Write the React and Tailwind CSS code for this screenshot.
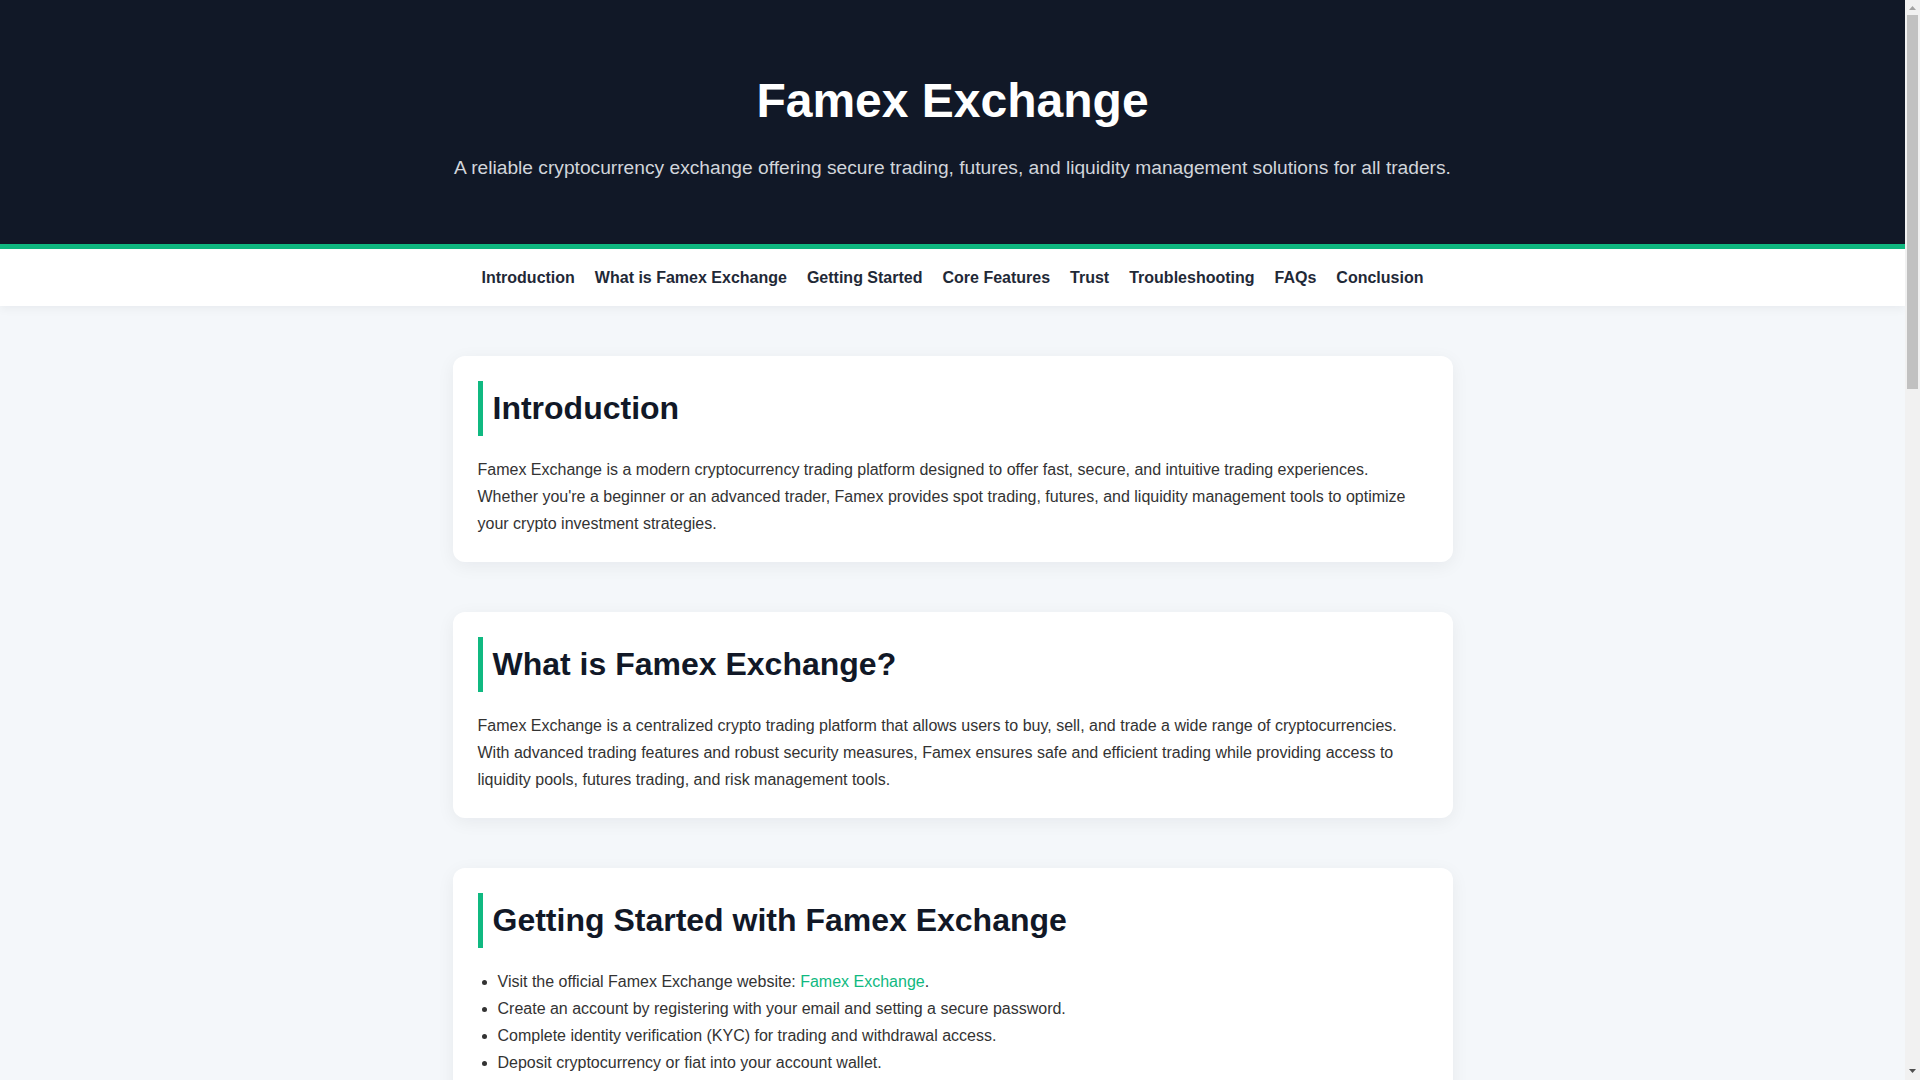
import React from "react";

const navItems = [
  "Introduction",
  "What is Famex Exchange",
  "Getting Started",
  "Core Features",
  "Trust",
  "Troubleshooting",
  "FAQs",
  "Conclusion",
];

function Card({ title, children }) {
  return (
    <section className="bg-white rounded-[12px] p-[25px] shadow-[0_4px_18px_rgba(15,23,42,0.06)]">
      <h2 className="border-l-[5px] border-[#10b981] pl-[10px] py-2 text-[32px] leading-[1.2] font-bold text-[#111827] mb-[20px]">
        {title}
      </h2>
      {children}
    </section>
  );
}

function P({ children, className = "" }) {
  return <p className={"text-[16px] leading-[1.7] text-[#333333] " + className}>{children}</p>;
}

function UL({ items }) {
  return (
    <ul className="list-disc pl-5 text-[16px] leading-[1.7] text-[#333333]">
      {items.map((it, i) => (
        <li key={i}>{it}</li>
      ))}
    </ul>
  );
}

function FakeScrollbar() {
  return (
    <div className="fixed top-0 right-0 h-screen w-[15px] bg-[#f1f1f1] flex flex-col">
      <div className="h-[15px] flex items-start justify-center pt-[6px]">
        <svg width="7" height="4" viewBox="0 0 7 4">
          <polygon points="3.5,0 7,4 0,4" fill="#a3a3a3" />
        </svg>
      </div>
      <div className="flex-1 px-[2px]">
        <div className="h-[374px] bg-[#c1c1c1]" />
      </div>
      <div className="h-[15px] flex items-start justify-center pt-[4px]">
        <svg width="7" height="4" viewBox="0 0 7 4">
          <polygon points="0,0 7,0 3.5,4" fill="#505050" />
        </svg>
      </div>
    </div>
  );
}

export default function App() {
  return (
    <div className="min-h-screen bg-[#f4f7fa] pr-[15px] font-['Liberation_Sans',Arial,sans-serif]">
      <header className="bg-[#111827] border-b-[5px] border-[#10b981] pt-[72px] pb-[61px] text-center">
        <h1 className="text-[48px] leading-[1.2] font-bold text-white">Famex Exchange</h1>
        <p className="mt-[23px] text-[19.2px] leading-[1.6] text-[#d1d5db]">
          A reliable cryptocurrency exchange offering secure trading, futures, and liquidity management solutions for all traders.
        </p>
      </header>

      <nav className="bg-white h-[57px] flex items-center justify-center gap-[20px] shadow-[0_2px_10px_rgba(15,23,42,0.06)] relative">
        {navItems.map((n) => (
          <a key={n} href="#" className="text-[16px] font-bold text-[#1f2937]">
            {n}
          </a>
        ))}
      </nav>

      <main className="max-w-[1000px] mx-auto pt-[50px] pb-[50px] flex flex-col gap-[50px]">
        <Card title="Introduction">
          <P>
            Famex Exchange is a modern cryptocurrency trading platform designed to offer fast, secure, and intuitive trading experiences. Whether you're a beginner or an advanced trader, Famex provides spot trading, futures, and liquidity management tools to optimize your crypto investment strategies.
          </P>
        </Card>

        <Card title="What is Famex Exchange?">
          <P>
            Famex Exchange is a centralized crypto trading platform that allows users to buy, sell, and trade a wide range of cryptocurrencies. With advanced trading features and robust security measures, Famex ensures safe and efficient trading while providing access to liquidity pools, futures trading, and risk management tools.
          </P>
        </Card>

        <Card title="Getting Started with Famex Exchange">
          <UL
            items={[
              <>
                Visit the official Famex Exchange website:{" "}
                <a href="#" className="text-[#10b981]">Famex Exchange</a>.
              </>,
              "Create an account by registering with your email and setting a secure password.",
              "Complete identity verification (KYC) for trading and withdrawal access.",
              "Deposit cryptocurrency or fiat into your account wallet.",
              "Explore spot and futures markets and place your first trade.",
              "Enable two-factor authentication (2FA) to secure your account.",
            ]}
          />
        </Card>

        <Card title="Core Features of Famex Exchange">
          <UL
            items={[
              "Spot Trading: Buy and sell cryptocurrencies instantly at market prices.",
              "Futures Trading: Trade perpetual contracts with adjustable leverage.",
              "Liquidity Management: Access deep liquidity pools for efficient order execution.",
              "Advanced Charting: Analyze markets with professional trading tools and indicators.",
              "Risk Management: Use stop-loss and take-profit orders to protect your positions.",
              "Mobile App: Trade on the go with the Famex mobile application.",
            ]}
          />
        </Card>

        <Card title="Why Traders Trust Famex Exchange">
          <P>
            Famex Exchange prioritizes user security with cold wallet storage, multi-layer encryption, and real-time risk monitoring. Transparent fee structures, responsive customer support, and a commitment to regulatory compliance make Famex a trusted choice for traders worldwide.
          </P>
          <P className="mt-[16px]">
            Regular security audits and a dedicated protection fund help safeguard user assets against unexpected events, giving traders confidence in every transaction.
          </P>
        </Card>

        <Card title="Troubleshooting Common Issues">
          <UL
            items={[
              "Login problems: Reset your password or check your 2FA device time settings.",
              "Delayed deposits: Confirm the network and wait for the required block confirmations.",
              "Withdrawal issues: Ensure KYC verification is complete and addresses are correct.",
              "Order not filled: Review your limit price and current market liquidity.",
              "App errors: Update to the latest version or clear the app cache.",
            ]}
          />
        </Card>

        <Card title="Frequently Asked Questions">
          <UL
            items={[
              "Is Famex Exchange safe? Yes, Famex uses advanced security protocols to protect user funds.",
              "Does Famex support futures trading? Yes, Famex offers perpetual futures with flexible leverage.",
              "How long do withdrawals take? Most withdrawals are processed within minutes.",
              "What are the trading fees? Famex offers competitive maker and taker fees.",
              "Is there a mobile app? Yes, Famex is available on both iOS and Android.",
            ]}
          />
        </Card>

        <Card title="Conclusion">
          <P>
            Famex Exchange combines powerful trading tools, strong security, and an easy-to-use interface, making it a solid choice for both beginners and experienced traders. Get started today and take control of your crypto trading journey with Famex.
          </P>
        </Card>
      </main>

      <footer className="bg-[#111827] text-center py-[25px] text-[14px] text-[#9ca3af]">
        © 2025 Famex Exchange Guide. All rights reserved.
      </footer>

      <FakeScrollbar />
    </div>
  );
}
